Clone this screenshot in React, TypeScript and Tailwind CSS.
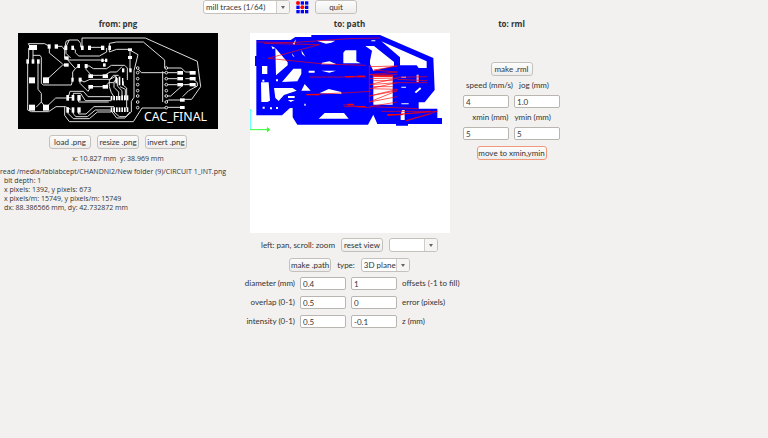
import { useState } from "react";
import type { ReactNode } from "react";

const button =
    "h-[14px] rounded-[3px] border border-[#c4c1bd] bg-linear-to-b from-[#fcfcfc] to-[#eeedec] text-center leading-[10px] whitespace-nowrap";

const heading = "mt-[5px] font-['Open_Sans','Noto_Sans',sans-serif] font-bold";

function Button({ children, className = "w-[42px]" }: { children: ReactNode; className?: string }) {
    return (
        <button type="button" className={`${button} ${className}`}>
            {children}
        </button>
    );
}

function Field({ id, value }: { id: string; value: string }) {
    const [text, setText] = useState(value);

    return (
        <input
            id={id}
            value={text}
            onChange={(e) => setText(e.target.value)}
            className="h-[13px] w-[46px] rounded-[2px] border border-[#b9b6b2] bg-white px-[2px] leading-[11px]"
        />
    );
}

function Select({ label, options, className }: { label: string; options: string[]; className: string }) {
    return (
        <span className={`relative flex h-[14px] rounded-[3px] border border-[#c4c1bd] bg-white ${className}`}>
            <select aria-label={label} className="w-full appearance-none bg-transparent pl-[2px] leading-[12px] outline-none">
                {options.map((option) => (
                    <option key={option}>{option}</option>
                ))}
            </select>
            <span className="pointer-events-none absolute inset-y-0 right-0 flex w-[13px] items-center justify-center rounded-r-[2px] border-l border-[#cfccc9] bg-[#f6f5f4]">
                <svg viewBox="0 0 4 3" className="w-1" fill="#666">
                    <path d="M0 0h4L2 3z" />
                </svg>
            </span>
        </span>
    );
}

function Logo() {
    const dots = [0, 1, 2].flatMap((row) => [0, 1, 2].map((col) => ({ row, col })));

    return (
        <svg viewBox="0 0 39 39" className="size-[13px]" aria-label="logo">
            {dots.map(({ row, col }) =>
                (row === 0 && col === 0) || (row === 1 && col === 1) ? (
                    <circle key={`${row}${col}`} cx={6 + col * 13} cy={6 + row * 13} r="6" fill="#f00" />
                ) : (
                    <rect key={`${row}${col}`} x={1 + col * 13} y={1 + row * 13} width="10" height="10" fill="#00f" />
                ),
            )}
        </svg>
    );
}

const traces = [
    "M62 60L55 47H104L118 55M56 60V90L53 100V246L64 251H116L138 236H166L182 244",
    "M118 60V75L158 108M168 111H158L108 157M69 66V100M84 100V184L94 196V222L107 238M69 82H90L94 88V166L100 171H184L188 155",
    "M94 222L78 238M108 238L137 210H170L190 208M138 55H156L164 66V90L176 96H270L284 98",
    "M164 66L168 40L178 36H204L212 46V58M178 36L168 56V76L182 90M188 58L196 66V74L206 84H268L290 72V60M216 58V30H406L562 100L572 176L545 214H520",
    "M240 58H276M298 58V46L320 42H400L464 96V120M298 60V72L320 64H356L384 80L372 128V208L364 220V252L344 270H320L302 246",
    "M168 90L196 122L206 114M196 122L188 132V155M228 114V124L244 142H284L300 132H320L336 116M228 114H238L250 122H290L304 112H344L352 120V156",
    "M210 155L222 162L240 154H300L318 144M210 155V166L234 190L244 174M244 176H286M286 176L296 164H310L318 154",
    "M174 210L180 190H220L234 206H300M190 210V196H212L226 218H304M206 210V222H296",
    "M164 236V262L178 281H370L396 240H470M174 246V256L190 272H238L262 252H304M190 246V258L198 266H232L256 246H300M206 246V258H228L252 236H312",
    "M312 216V206L304 194L298 176V156L310 142H326M326 216V192L312 178V164L320 152M336 216V188L322 174V150M346 216V184L330 176",
    "M312 238V252L328 266H348L360 252M340 160V172L350 180V240M360 66V130M382 120L394 134H502M464 120H514L526 132H546M464 152H502M464 170H502M464 204H482L520 170H544L560 176",
    "M464 222L476 216H512M464 238H512M458 130V222M548 152L562 164V174L536 188L518 206M526 152H546M526 170L546 168",
];

// x, y, width, height
const pads = [
    [57, 51, 24, 15], [113, 49, 9, 13], [134, 49, 10, 13], [49, 94, 8, 13], [65, 94, 8, 13], [81, 94, 8, 13],
    [57, 148, 18, 18], [99, 148, 18, 18], [57, 230, 18, 18], [99, 230, 18, 18], [162, 106, 14, 10], [163, 85, 13, 10],
    [163, 53, 9, 13], [184, 53, 8, 13], [213, 53, 8, 13], [234, 53, 9, 13], [273, 53, 10, 13], [295, 53, 8, 13],
    [202, 108, 8, 12], [224, 108, 9, 12], [274, 92, 7, 10], [285, 92, 7, 10], [279, 106, 8, 10],
    [184, 149, 7, 12], [206, 149, 9, 12], [235, 139, 14, 11], [278, 139, 16, 11], [235, 171, 14, 11], [278, 171, 16, 11],
    [169, 201, 8, 17], [185, 201, 8, 17], [202, 201, 10, 17], [169, 238, 8, 16], [185, 238, 8, 16], [202, 238, 10, 16],
    [302, 204, 5, 13], [310, 204, 5, 13], [318, 204, 5, 13], [326, 204, 5, 13], [334, 202, 5, 15], [342, 202, 5, 15], [350, 202, 5, 15],
    [302, 238, 5, 14], [310, 238, 5, 14], [318, 238, 5, 14], [326, 238, 5, 14], [334, 238, 5, 14], [342, 238, 5, 14], [350, 238, 5, 14],
    [316, 146, 5, 20], [326, 146, 5, 26], [336, 150, 4, 22], [336, 121, 7, 12], [358, 121, 7, 12],
    [354, 61, 12, 8], [354, 84, 12, 9], [502, 129, 17, 11], [539, 129, 18, 11], [502, 147, 17, 10], [539, 147, 18, 10],
    [502, 165, 17, 10], [539, 165, 18, 10], [510, 211, 14, 10], [510, 234, 14, 9],
];

const pinRows = [120, 134, 152, 170, 188, 204, 222, 239];

function BoardImage() {
    return (
        <svg viewBox="24 15 600 288" className="w-[200px] bg-black" aria-label="circuit traces">
            <g fill="none" stroke="#ddd" strokeWidth="3">
                {traces.map((d) => (
                    <path key={d} d={d} />
                ))}
                {pinRows.map((y) => (
                    <g key={y} fill="#000">
                        <circle cx="383" cy={y} r="4" />
                        <circle cx="469" cy={y} r="4" />
                    </g>
                ))}
            </g>
            <g fill="#fff">
                {pads.map(([x, y, w, h]) => (
                    <rect key={`${x}-${y}`} x={x} y={y} width={w} height={h} />
                ))}
                <text x="402" y="280" fontSize="37" className="font-['Noto_Sans',sans-serif]">
                    CAC_FINAL
                </text>
            </g>
        </svg>
    );
}

function ToolPath() {
    return (
        <svg viewBox="18 15 600 600" className="w-[200px] bg-white" aria-label="tool path">
            <path
                fill="#00f"
                d="M37 36H140L154 27H202V21H408L568 90L572 186L542 223H524V242H580V270H594V288H492V293H456V288H400L388 260L372 290H160L146 268V240H138L114 262H37V114H33V84H37Z"
            />
            <g fill="#fff">
                <path d="M94 60L131 103V112L96 142ZM54 114H70V138H54ZM51 163H74L78 218L70 222H52ZM90 180H146L158 188L120 201L104 219L94 210Z" />
                <path d="M114 162L148 122H172V138L160 160ZM172 188L182 168L200 188ZM224 272L242 255H300L314 272ZM226 196L254 183L292 192V198ZM234 104L256 100L278 109H232Z" />
                <path d="M298 74L304 67H337V100L350 106H298ZM378 98L384 68L364 54H390L450 102V114L388 128L378 108ZM412 40L548 100V120H524L518 112H468V88Z" />
                <path d="M388 143H446V230H388ZM474 246H482V276H470V262ZM512 192L528 178L532 182L516 196ZM518 140H524V162H518Z" />
                <path d="M218 38H274L262 44L246 47ZM144 76L152 88L146 84ZM172 66L184 86L174 78ZM82 54L94 60L86 64ZM194 128H212V134H194ZM232 128H276L256 134ZM132 204H152V210H132ZM132 216H152L140 222ZM146 48L156 34L152 50ZM472 146H486V149H472ZM472 176H486V179H472ZM472 226H494V229H472ZM382 37H394V40H382Z" />
                <path d="M55 155h6v6h-6zM96 154h6v6h-6zM56 236h6v6h-6zM78 238h6v6h-6zM96 237h6v6h-6zM181 227h4v6h-4z" />
            </g>
            <g fill="none" stroke="#f00" strokeWidth="2">
                <path d="M40 42L140 44L315 32L408 30M60 46L226 50L72 91L240 108L366 112M196 147H366M186 200L315 194L380 190M298 230L380 240M300 236H364M304 146L362 144" />
                <path d="M376 116L460 114L390 126L460 132L376 140H460M376 152L460 150L376 170L460 164L376 182L460 184L376 204L460 188L376 222L460 206M376 236L460 222M388 158H446M388 176H446M388 146H446" />
                <path d="M460 148L550 146M460 154L550 158M460 164H550M412 250H560L430 262L580 250L486 278L560 258M380 236L524 242M376 112V222M522 140V162" />
                <path strokeWidth="4" d="M304 146H330M340 145H362M310 229H330M340 236H364M430 260H476M188 200H226M386 144H446" />
            </g>
            <g fill="none" strokeWidth="3">
                <path stroke="#5ff" d="M20 304V246M16 250L20 244L24 250" />
                <path stroke="#3f3" fill="#3f3" d="M18 305H74M70 299L77 305L70 311Z" />
            </g>
        </svg>
    );
}

const pathSettings = [
    { id: "diameter", left: "diameter (mm)", value: "0.4", other: "offsets", second: "1", right: "offsets (-1 to fill)" },
    { id: "overlap", left: "overlap (0-1)", value: "0.5", other: "error", second: "0", right: "error (pixels)" },
    { id: "intensity", left: "intensity (0-1)", value: "0.5", other: "z", second: "-0.1", right: "z (mm)" },
];

export default function App() {
    return (
        <div className="min-h-screen bg-[#f2f1f0] font-[Lato,'Noto_Sans',sans-serif] text-[8px] leading-[9px] text-[#333]">
            <div className="w-fit">
                <header className="flex items-center justify-center gap-[6px]">
                    <Select label="process" options={["mill traces (1/64)"]} className="w-[87px]" />
                    <Logo />
                    <Button>quit</Button>
                </header>

                <main className="flex items-start gap-[7px]">
                    <section className="flex w-[236px] flex-col items-center">
                        <h2 className={`${heading} mb-[5px]`}>from: png</h2>
                        <BoardImage />
                        <div className="mt-[6px] flex gap-[6px]">
                            <Button>load .png</Button>
                            <Button>resize .png</Button>
                            <Button>invert .png</Button>
                        </div>
                        <div className="mt-[5px] w-full font-['Open_Sans','Noto_Sans',sans-serif] text-[7px] leading-[9px] whitespace-nowrap">
                            <p className="mb-1 text-center">x: 10.827 mm&nbsp; y: 38.969 mm</p>
                            <p>read /media/fablabcept/CHANDNI2/New folder (9)/CIRCUIT 1_INT.png</p>
                            <div className="pl-1">
                                <p>bit depth: 1</p>
                                <p>x pixels: 1392, y pixels: 673</p>
                                <p>x pixels/m: 15749, y pixels/m: 15749</p>
                                <p>dx: 88.386566 mm, dy: 42.732872 mm</p>
                            </div>
                        </div>
                    </section>

                    <section className="flex w-[213px] flex-col items-center">
                        <h2 className={`${heading} mb-[5px]`}>to: path</h2>
                        <ToolPath />
                        <div className="mt-[5px] flex items-center gap-[6px]">
                            <span>left: pan, scroll: zoom</span>
                            <Button>reset view</Button>
                            <Select label="view" options={[""]} className="w-[49px]" />
                        </div>
                        <div className="mt-[6px] flex items-center gap-[6px]">
                            <Button>make .path</Button>
                            <span>type:</span>
                            <Select label="path type" options={["3D plane"]} className="w-[49px]" />
                        </div>
                        <div className="mt-[5px] grid w-full grid-cols-[52px_46px_46px_1fr] items-center gap-x-[5px] gap-y-[6px] whitespace-nowrap">
                            {pathSettings.map((row) => (
                                <div key={row.id} className="contents">
                                    <label htmlFor={row.id} className="text-right">{row.left}</label>
                                    <Field id={row.id} value={row.value} />
                                    <Field id={row.other} value={row.second} />
                                    <label htmlFor={row.other}>{row.right}</label>
                                </div>
                            ))}
                        </div>
                    </section>

                    <section className="flex w-[97px] flex-col items-center">
                        <h2 className={`${heading} mb-[34px]`}>to: rml</h2>
                        <Button>make .rml</Button>
                        <div className="mt-[5px] flex flex-col gap-[5px] whitespace-nowrap">
                            <div className="flex justify-center gap-[6px] pr-2">
                                <label htmlFor="speed">speed (mm/s)</label>
                                <label htmlFor="jog">jog (mm)</label>
                            </div>
                            <div className="flex gap-[5px]">
                                <Field id="speed" value="4" />
                                <Field id="jog" value="1.0" />
                            </div>
                            <div className="flex justify-center gap-[6px]">
                                <label htmlFor="xmin">xmin (mm)</label>
                                <label htmlFor="ymin">ymin (mm)</label>
                            </div>
                            <div className="flex gap-[5px]">
                                <Field id="xmin" value="5" />
                                <Field id="ymin" value="5" />
                            </div>
                        </div>
                        <Button className="mt-[6px] w-[70px] border-[#f0997a]">move to xmin,ymin</Button>
                    </section>
                </main>
            </div>
        </div>
    );
}
